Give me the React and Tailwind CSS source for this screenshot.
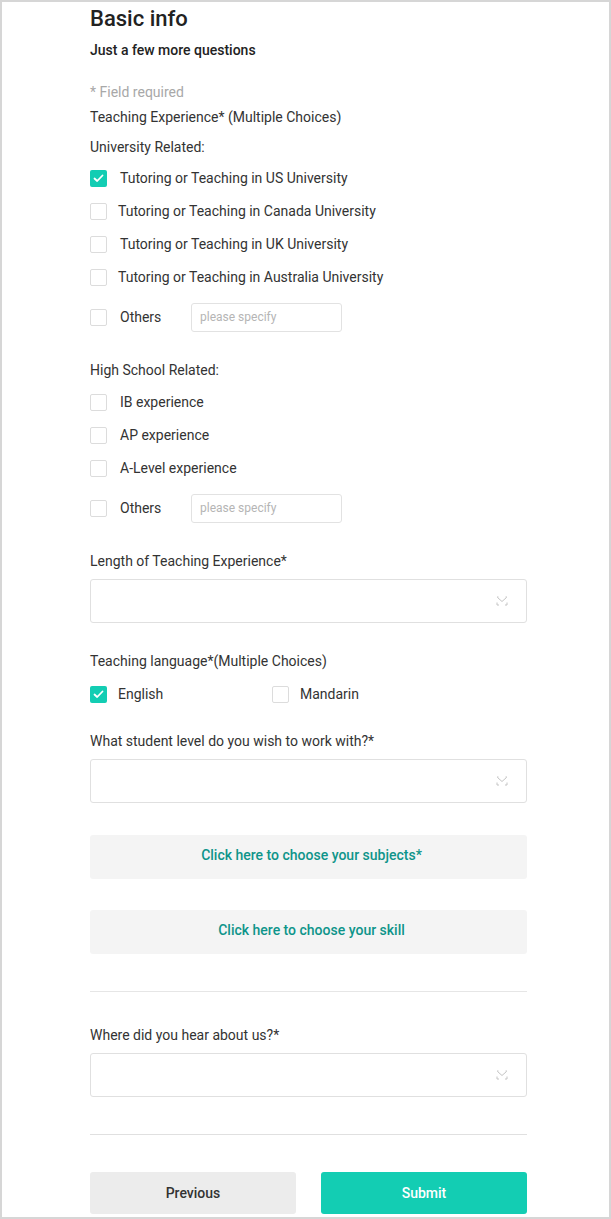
import React from 'react'

const font = { fontFamily: 'Roboto, "Liberation Sans", sans-serif' }

function Box({ checked }) {
  if (checked) {
    return (
      <span className="w-[17px] h-[17px] rounded-[2px] bg-[#13cdb3] flex items-center justify-center shrink-0">
        <svg width="11" height="9" viewBox="0 0 11 9" fill="none">
          <path d="M1.5 4.5 L4.2 7 L9.5 1.5" stroke="#fff" strokeWidth="1.8" strokeLinecap="round" strokeLinejoin="round" />
        </svg>
      </span>
    )
  }
  return <span className="w-[17px] h-[17px] rounded-[2px] border border-[#dcdcdc] bg-white shrink-0" />
}

function CheckRow({ label, checked, gap = 'ml-[13px]' }) {
  return (
    <div className="h-[33px] flex items-center">
      <Box checked={checked} />
      <span className={`${gap} text-[14px] text-[#333]`}>{label}</span>
    </div>
  )
}

function OthersRow({ className }) {
  return (
    <div className={`h-[28px] flex items-center ${className}`}>
      <Box />
      <span className="ml-[13px] text-[14px] text-[#333] w-[71px]">Others</span>
      <div className="w-[151px] h-[29px] border border-[#e2e2e2] rounded-[3px] flex items-center px-[8px] text-[12px] text-[#b5b5b5]">
        please specify
      </div>
    </div>
  )
}

function Select({ className }) {
  return (
    <div className={`h-[44px] border border-[#e0e0e0] rounded-[3px] flex items-center justify-end pr-[18px] ${className}`}>
      <svg width="12" height="10" viewBox="0 0 12 10" fill="none">
        <path d="M1.5 1.5 L6 5.5 L10.5 1.5" stroke="#c4c4c4" strokeWidth="1" />
        <path d="M1 6.5 V9 H3 M11 6.5 V9 H9 M1 1 H2.5 M11 1 H9.5" stroke="#c4c4c4" strokeWidth="1" />
      </svg>
    </div>
  )
}

function Label({ children, className }) {
  return <div className={`text-[14px] leading-[20px] text-[#333] ${className}`}>{children}</div>
}

export default function App() {
  return (
    <div style={font} className="w-[611px] h-[1219px] border-2 border-[#d6d6d6] bg-white">
      <div className="ml-[88px] w-[437px] flex flex-col">
        <h1 className="text-[22px] leading-[28px] font-medium text-[#222] mt-[3px]">Basic info</h1>
        <div className="mt-[7px] text-[14px] leading-[20px] font-medium text-[#222]">Just a few more questions</div>
        <div className="mt-[22px] text-[14px] leading-[20px] text-[#a8a8a8]">* Field required</div>
        <Label className="mt-[5px]">Teaching Experience* (Multiple Choices)</Label>
        <Label className="mt-[10px]">University Related:</Label>
        <div className="mt-[5px] flex flex-col">
          <CheckRow label="Tutoring or Teaching in US University" checked />
          <CheckRow label="Tutoring or Teaching in Canada University" gap="ml-[11px]" />
          <CheckRow label="Tutoring or Teaching in UK University" />
          <CheckRow label="Tutoring or Teaching in Australia University" gap="ml-[11px]" />
        </div>
        <OthersRow className="mt-[9px]" />

        <Label className="mt-[29px]">High School Related:</Label>
        <div className="mt-[6px] flex flex-col">
          <CheckRow label="IB experience" />
          <CheckRow label="AP experience" />
          <CheckRow label="A-Level experience" />
        </div>
        <OthersRow className="mt-[9px]" />

        <Label className="mt-[29px]">Length of Teaching Experience*</Label>
        <Select className="mt-[8px]" />

        <Label className="mt-[28px]">Teaching language*(Multiple Choices)</Label>
        <div className="mt-[7px] h-[33px] flex items-center">
          <div className="w-[182px] flex items-center">
            <Box checked />
            <span className="ml-[11px] text-[14px] text-[#333]">English</span>
          </div>
          <Box />
          <span className="ml-[11px] text-[14px] text-[#333]">Mandarin</span>
        </div>

        <Label className="mt-[20px]">What student level do you wish to work with?*</Label>
        <Select className="mt-[8px]" />

        <button className="mt-[32px] h-[44px] rounded-[3px] bg-[#f4f4f4] pl-[6px] pb-[3px] text-[14px] font-medium text-[#0e948a]">
          Click here to choose your subjects*
        </button>
        <button className="mt-[31px] h-[44px] rounded-[3px] bg-[#f4f4f4] pl-[6px] pb-[3px] text-[14px] font-medium text-[#0e948a]">
          Click here to choose your skill
        </button>

        <div className="mt-[37px] h-px bg-[#e6e6e6]" />

        <Label className="mt-[33px]">Where did you hear about us?*</Label>
        <Select className="mt-[8px]" />

        <div className="mt-[37px] h-px bg-[#e0e0e0]" />

        <div className="mt-[37px] flex justify-between">
          <button className="w-[206px] h-[42px] rounded-[3px] bg-[#ececec] text-[14px] font-medium text-[#333]">Previous</button>
          <button className="w-[206px] h-[42px] rounded-[3px] bg-[#13cdb3] text-[14px] font-medium text-white">Submit</button>
        </div>
      </div>
    </div>
  )
}
